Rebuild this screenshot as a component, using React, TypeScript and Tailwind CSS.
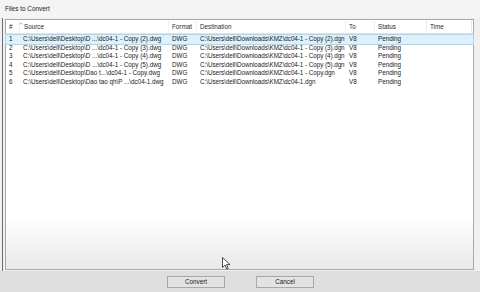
import React from "react";

const rows = [
  ["1", "C:\\Users\\dell\\Desktop\\D ...\\dc04-1 - Copy (2).dwg", "DWG", "C:\\Users\\dell\\Downloads\\KMZ\\dc04-1 - Copy (2).dgn", "V8", "Pending"],
  ["2", "C:\\Users\\dell\\Desktop\\D ...\\dc04-1 - Copy (3).dwg", "DWG", "C:\\Users\\dell\\Downloads\\KMZ\\dc04-1 - Copy (3).dgn", "V8", "Pending"],
  ["3", "C:\\Users\\dell\\Desktop\\D ...\\dc04-1 - Copy (4).dwg", "DWG", "C:\\Users\\dell\\Downloads\\KMZ\\dc04-1 - Copy (4).dgn", "V8", "Pending"],
  ["4", "C:\\Users\\dell\\Desktop\\D ...\\dc04-1 - Copy (5).dwg", "DWG", "C:\\Users\\dell\\Downloads\\KMZ\\dc04-1 - Copy (5).dgn", "V8", "Pending"],
  ["5", "C:\\Users\\dell\\Desktop\\Dao t...\\dc04-1 - Copy.dwg", "DWG", "C:\\Users\\dell\\Downloads\\KMZ\\dc04-1 - Copy.dgn", "V8", "Pending"],
  ["6", "C:\\Users\\dell\\Desktop\\Dao tao qh\\P ...\\dc04-1.dwg", "DWG", "C:\\Users\\dell\\Downloads\\KMZ\\dc04-1.dgn", "V8", "Pending"],
];

function Cells({ cells }: { cells: string[] }) {
  return (
    <>
      <div className="w-[14px] shrink-0 pl-[3px] overflow-hidden whitespace-nowrap">{cells[0]}</div>
      <div className="w-[149px] shrink-0 pl-[3px] overflow-hidden whitespace-nowrap">{cells[1]}</div>
      <div className="w-[28px] shrink-0 pl-[3px] overflow-hidden whitespace-nowrap">{cells[2]}</div>
      <div className="w-[149px] shrink-0 pl-[3px] whitespace-nowrap tracking-[-0.05px]">{cells[3]}</div>
      <div className="w-[29px] shrink-0 pl-[3px] overflow-hidden whitespace-nowrap">{cells[4]}</div>
      <div className="w-[52px] shrink-0 pl-[3px] overflow-hidden whitespace-nowrap">{cells[5]}</div>
      <div className="w-[45px] shrink-0 pl-[3px] overflow-hidden whitespace-nowrap">{cells[6] ?? ""}</div>
    </>
  );
}

export default function App() {
  return (
    <div
      className="relative w-[480px] h-[292px] bg-[#f0f0f0] flex flex-col overflow-hidden text-[6.3px] text-[#222]"
      style={{ fontFamily: '"Liberation Sans", Arial, sans-serif' }}
    >
      <div className="h-[18px] shrink-0 pl-[5px] pt-[5px] leading-[7px] text-[6.4px] bg-[#f4f4f4]">Files to Convert</div>
      <div className="flex-1 flex min-h-0">
        <div className="w-[2px] shrink-0" />
        <div className="w-[1px] shrink-0 bg-[#6e6e6e]" />
        <div className="w-[2px] shrink-0" />
        <div className="flex-1 flex flex-col pb-[1px]">
          <div className="mt-[1px] h-[252px] border border-[#a9a9a9] bg-linear-to-b from-white from-80% to-[#e9e9e9] flex flex-col">
            <div className="h-[14px] flex items-center border-b border-[#e3e3e3] text-[#2a2a2a] relative">
              <div className="w-[14px] shrink-0 pl-[3px] border-r border-[#f2f2f2] h-full flex items-center">#</div>
              <div className="w-[149px] shrink-0 pl-[4px] border-r border-[#f2f2f2] h-full flex items-center relative">
                <svg className="absolute left-[-1px] top-[2px]" width="4" height="3" viewBox="0 0 4 3">
                  <path d="M0.5 2.5 L2 1 L3.5 2.5" fill="none" stroke="#9a9a9a" strokeWidth="0.7" />
                </svg>
                Source
              </div>
              <div className="w-[28px] shrink-0 pl-[3px] border-r border-[#f2f2f2] h-full flex items-center">Format</div>
              <div className="w-[149px] shrink-0 pl-[3px] border-r border-[#f2f2f2] h-full flex items-center">Destination</div>
              <div className="w-[29px] shrink-0 pl-[3px] border-r border-[#f2f2f2] h-full flex items-center">To</div>
              <div className="w-[52px] shrink-0 pl-[3px] border-r border-[#e8e8e8] h-full flex items-center">Status</div>
              <div className="w-[45px] shrink-0 pl-[3px] border-r border-[#e8e8e8] h-full flex items-center">Time</div>
            </div>
            <div className="flex flex-col pt-[1px]">
              {rows.map((r, i) => (
                <div
                  key={i}
                  className={
                    i === 0
                      ? "h-[8.6px] leading-[8.6px] flex bg-[#dcf1fb] outline outline-[0.6px] outline-[#a8d8f0]"
                      : "h-[8.6px] leading-[8.6px] flex"
                  }
                >
                  <Cells cells={r} />
                </div>
              ))}
            </div>
          </div>
        </div>
        <div className="w-[6px] shrink-0" />
      </div>
      <div className="h-[21px] shrink-0 bg-[#dedede] flex items-center justify-center gap-[31px] pl-[1px]">
        <div className="w-[58px] h-[12px] border border-[#a8a8a8] bg-[#e3e3e3] flex items-center justify-center text-[#222]">Convert</div>
        <div className="w-[58px] h-[12px] border border-[#a8a8a8] bg-[#e3e3e3] flex items-center justify-center text-[#222]">Cancel</div>
      </div>
      <svg className="absolute left-[222px] top-[257px]" width="9" height="13" viewBox="0 0 9 13">
        <path d="M0.5 0.5 L0.5 10.5 L3 8 L4.8 12 L6.2 11.4 L4.5 7.6 L8 7.6 Z" fill="white" stroke="#222" strokeWidth="0.8" strokeLinejoin="round" />
      </svg>
    </div>
  );
}
